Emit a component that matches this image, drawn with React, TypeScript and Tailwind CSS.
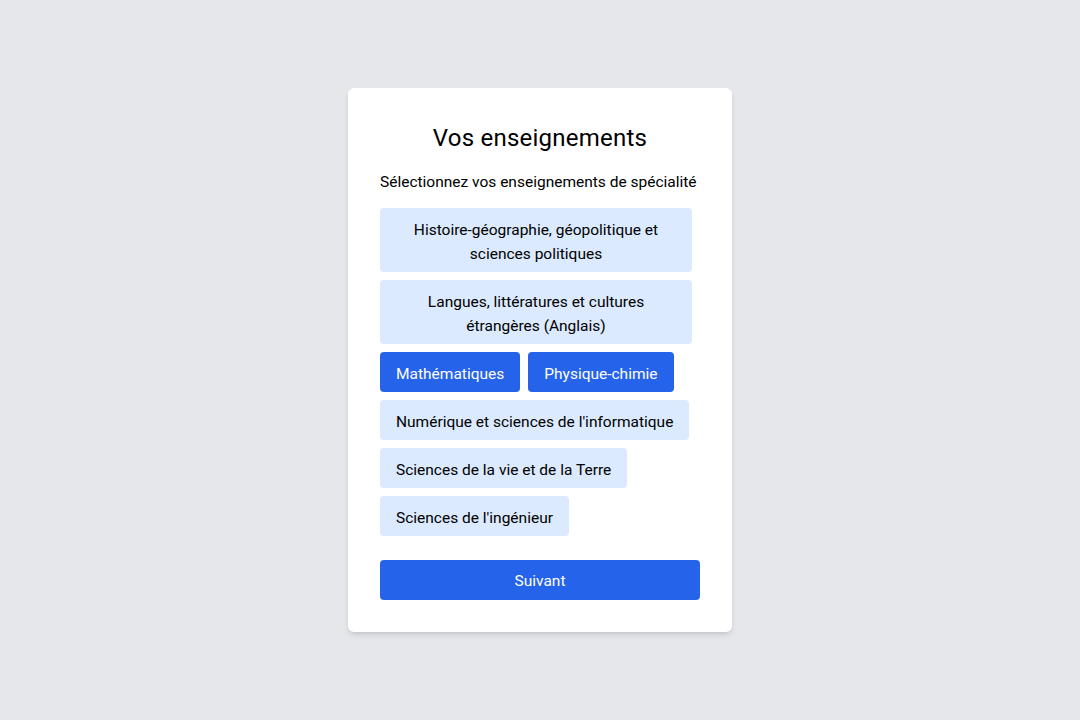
const specialites = [
  { label: "Histoire-géographie, géopolitique et sciences politiques", selected: false },
  { label: "Langues, littératures et cultures étrangères (Anglais)", selected: false },
  { label: "Mathématiques", selected: true },
  { label: "Physique-chimie", selected: true },
  { label: "Numérique et sciences de l'informatique", selected: false },
  { label: "Sciences de la vie et de la Terre", selected: false },
  { label: "Sciences de l'ingénieur", selected: false },
];

export default function App() {
  return (
    <div
      className="min-h-screen bg-[#e5e7eb] flex items-start justify-center pt-[88px]"
      style={{ fontFamily: "Roboto, 'Liberation Sans', sans-serif" }}
    >
      <div className="w-[384px] bg-white rounded-md shadow-md p-8">
        <h1 className="text-2xl text-center text-black mt-[2px] mb-[14px] tracking-[0.01em]">
          Vos enseignements
        </h1>
        <p className="text-[15.5px] leading-6 text-black mb-[14px] pt-[2px]">
          Sélectionnez vos enseignements de spécialité
        </p>
        <div className="flex flex-wrap gap-2">
          {specialites.map((s) => (
            <button
              key={s.label}
              className={
                "max-w-[312px] px-4 pt-[10px] pb-[6px] rounded text-[15.5px] leading-6 text-center " +
                (s.selected ? "bg-[#2563eb] text-white" : "bg-[#dbeafe] text-black")
              }
            >
              {s.label}
            </button>
          ))}
        </div>
        <button className="mt-6 w-full h-10 pt-[3px] rounded bg-[#2563eb] text-white text-[15.5px]">
          Suivant
        </button>
      </div>
    </div>
  );
}
